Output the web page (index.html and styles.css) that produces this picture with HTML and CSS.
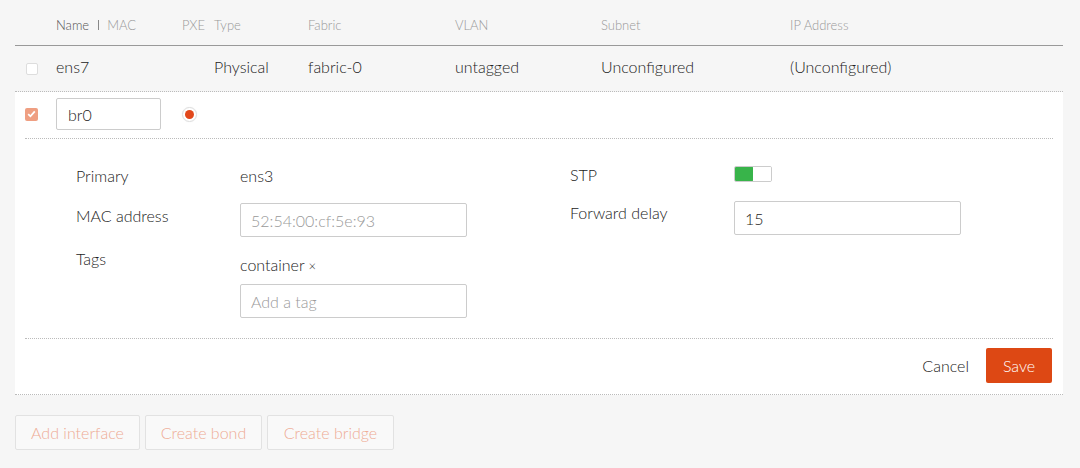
FILE: index.html
```html
<!DOCTYPE html>
<html>
<head>
<meta charset="utf-8">
<link rel="stylesheet" href="styles.css">
</head>
<body>
<div class="table">
  <div class="row thead">
    <div></div>
    <div class="th-name"><span class="th-strong">Name</span><span class="sep"></span><span>MAC</span></div>
    <div>PXE</div>
    <div>Type</div>
    <div>Fabric</div>
    <div>VLAN</div>
    <div>Subnet</div>
    <div>IP Address</div>
  </div>
  <div class="row trow">
    <div class="cell-check"><span class="checkbox"></span></div>
    <div>ens7</div>
    <div></div>
    <div>Physical</div>
    <div>fabric-0</div>
    <div>untagged</div>
    <div>Unconfigured</div>
    <div>(Unconfigured)</div>
  </div>
  <div class="panel">
    <div class="edit-row">
      <div class="cell-check">
        <span class="checkbox checked">
          <svg width="9" height="8" viewBox="0 0 9 8"><polyline points="1.2,4.2 3.4,6.3 7.8,1.3" fill="none" stroke="#fff" stroke-width="1.8"/></svg>
        </span>
      </div>
      <div><input class="name-input" type="text" value="br0"></div>
      <div class="cell-radio"><span class="radio"><span class="radio-dot"></span></span></div>
    </div>
    <div class="details">
      <div class="col col-left">
        <div class="field field-primary">
          <div class="label">Primary</div>
          <div class="value">ens3</div>
        </div>
        <div class="field field-mac">
          <div class="label label-offset">MAC address</div>
          <input class="text-input" type="text" placeholder="52:54:00:cf:5e:93">
        </div>
        <div class="field field-tags">
          <div class="label">Tags</div>
          <div class="value tags-value">
            <div class="tag">container <span class="tag-x">×</span></div>
            <input class="text-input" type="text" placeholder="Add a tag">
          </div>
        </div>
      </div>
      <div class="col col-right">
        <div class="field field-stp">
          <div class="label">STP</div>
          <div class="toggle"><span class="toggle-on"></span><span class="toggle-off"></span></div>
        </div>
        <div class="field field-fd">
          <div class="label">Forward delay</div>
          <input class="text-input" type="text" value="15">
        </div>
      </div>
    </div>
    <div class="actions">
      <button class="btn-link">Cancel</button>
      <button class="btn-primary">Save</button>
    </div>
  </div>
  <div class="bottom-actions">
    <button class="btn-disabled">Add interface</button>
    <button class="btn-disabled">Create bond</button>
    <button class="btn-disabled">Create bridge</button>
  </div>
</div>
</body>
</html>
```

FILE: styles.css
```css
html, body {
  margin: 0;
  padding: 0;
}
body {
  background: #f6f6f6;
  font-family: Lato, "Open Sans", sans-serif;
  font-weight: 300;
  font-size: 16px;
  color: #222;
  width: 1080px;
  height: 468px;
  overflow: hidden;
}
.table {
  margin-left: 15px;
  width: 1048px;
}
.row {
  display: grid;
  grid-template-columns: 41px 126px 32px 94px 147px 146px 189px 1fr;
  align-items: center;
}
.thead {
  border-bottom: 1px solid #999;
  font-size: 13px;
  color: #999;
  padding-top: 4px;
  box-sizing: border-box;
  height: 46px;
}
.th-name {
  display: flex;
  align-items: center;
}
.th-strong {
  color: #555;
}
.sep {
  display: inline-block;
  width: 1px;
  height: 10px;
  background: #888;
  margin: 0 8px 0 9px;
}
.trow {
  height: 46px;
  border-bottom: 1px dotted #bbb;
  box-sizing: border-box;
  padding-bottom: 4px;
}
.cell-check {
  display: flex;
  align-items: center;
  padding-left: 11px;
}
.trow .cell-check {
  padding-top: 4px;
}
.checkbox {
  width: 12px;
  height: 12px;
  border: 1px solid #ddd;
  border-radius: 2px;
  background: #fff;
  box-sizing: border-box;
  display: flex;
  align-items: center;
  justify-content: center;
}
.checkbox.checked {
  width: 13px;
  height: 13px;
  border: none;
  background: #ef9f82;
}
.panel {
  background: #fff;
  border-bottom: 1px dotted #bbb;
}
.edit-row {
  margin: 0 10px;
  height: 47px;
  box-sizing: border-box;
  border-bottom: 1px dotted #bbb;
  display: grid;
  grid-template-columns: 31px 126px 40px;
  align-items: center;
  padding-bottom: 2px;
}
.edit-row .cell-check {
  padding-left: 0;
}
.name-input {
  width: 105px;
  height: 32px;
  box-sizing: border-box;
  border: 1px solid #ccc;
  border-radius: 2px;
  padding: 0 0 0 11px;
  font-family: inherit;
  font-weight: 300;
  font-size: 16px;
  color: #222;
  background: #fff;
  outline: none;
}
.cell-radio {
  display: flex;
  align-items: center;
}
.radio {
  width: 15px;
  height: 15px;
  border-radius: 50%;
  border: 1px solid #ddd;
  box-sizing: border-box;
  display: flex;
  align-items: center;
  justify-content: center;
  box-shadow: 0 0 1px rgba(0,0,0,0.1);
}
.radio-dot {
  width: 9px;
  height: 9px;
  border-radius: 50%;
  background: #e2481b;
}
.details {
  margin: 0 10px;
  border-bottom: 1px dotted #bbb;
  display: grid;
  grid-template-columns: 494px 1fr;
  padding-left: 51px;
  height: 200px;
  box-sizing: border-box;
}
.col {
  display: flex;
  flex-direction: column;
}
.col-left {
  padding-top: 25px;
}
.col-right {
  padding-top: 24px;
}
.field {
  display: flex;
  align-items: flex-start;
}
.label {
  width: 164px;
  flex: none;
  line-height: 24px;
}
.value {
  line-height: 24px;
}
.field-mac {
  margin-top: 15px;
}
.label-offset {
  margin-top: 1px;
}
.field-tags {
  margin-top: 10px;
}
.tags-value {
  display: flex;
  flex-direction: column;
  gap: 6px;
  padding-top: 6px;
}
.tag-x {
  font-size: 13px;
}
.text-input {
  width: 227px;
  height: 34px;
  box-sizing: border-box;
  border: 1px solid #ccc;
  border-radius: 2px;
  padding: 0 0 0 10px;
  font-family: inherit;
  font-weight: 300;
  font-size: 16px;
  color: #222;
  background: #fff;
  outline: none;
}
.text-input::placeholder {
  color: #999;
}
.field-stp .toggle {
  margin-top: 3px;
}
.toggle {
  display: flex;
  width: 38px;
  height: 16px;
  border: 1px solid #ccc;
  border-radius: 2px;
  box-sizing: border-box;
  overflow: hidden;
}
.toggle-on {
  width: 19px;
  background: #38b44a;
  border-radius: 2px;
  margin: -1px 0 -1px -1px;
}
.toggle-off {
  flex: 1;
  background: #fff;
}
.field-fd {
  margin-top: 14px;
}
.actions {
  display: flex;
  justify-content: flex-end;
  align-items: center;
  gap: 3px;
  margin: 0 11px 0 10px;
  padding: 9px 0 11px;
}
.btn-link {
  background: none;
  border: none;
  font-family: inherit;
  font-weight: 300;
  font-size: 16px;
  color: #222;
  padding: 0 14px;
  height: 35px;
}
.btn-primary {
  background: #dd4814;
  color: #fff;
  border: none;
  border-radius: 2px;
  font-family: inherit;
  font-weight: 300;
  font-size: 16px;
  height: 35px;
  width: 66px;
  padding: 0;
}
.bottom-actions {
  display: flex;
  gap: 5px;
  margin-top: 20px;
}
.btn-disabled {
  background: #f9f9f9;
  border: 1px solid #e2e2e2;
  border-radius: 2px;
  color: #eeab94;
  font-family: inherit;
  font-weight: 300;
  font-size: 16px;
  height: 35px;
  padding: 0 14px;
}
.bottom-actions .btn-disabled:nth-child(1) { width: 125px; }
.bottom-actions .btn-disabled:nth-child(2) { width: 117px; }
.bottom-actions .btn-disabled:nth-child(3) { width: 127px; }
```
